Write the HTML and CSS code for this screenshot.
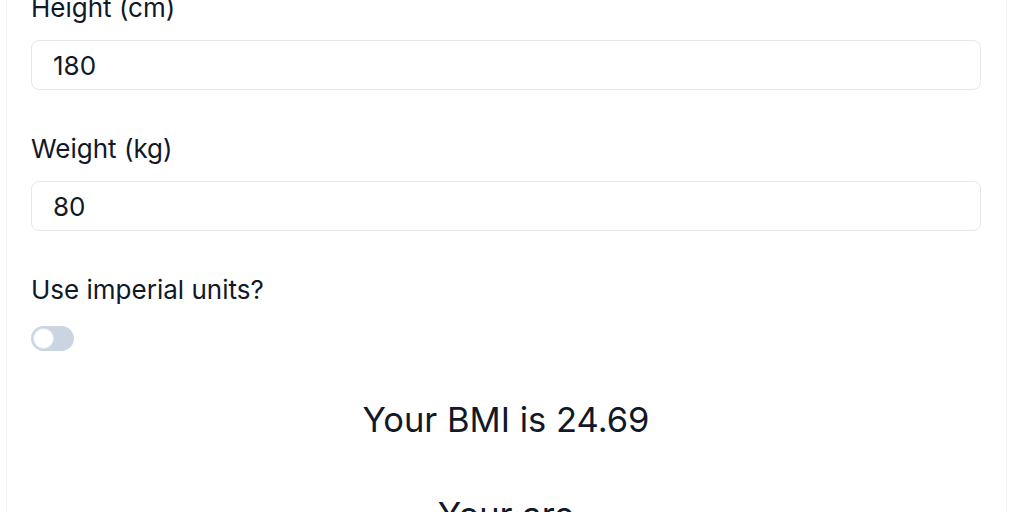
FILE: index.html
```html
<!DOCTYPE html>
<html lang="en">
<head>
<meta charset="utf-8">
<title>BMI Calculator</title>
<link rel="stylesheet" href="styles.css">
</head>
<body>
<main class="card">
  <div class="field">
    <label class="label" for="height">Height (cm)</label>
    <input class="input" id="height" type="text" value="180">
  </div>
  <div class="field">
    <label class="label" for="weight">Weight (kg)</label>
    <input class="input" id="weight" type="text" value="80">
  </div>
  <div class="field switch-field">
    <span class="label">Use imperial units?</span>
    <span class="toggle"><span class="knob"></span></span>
  </div>
  <p class="result">Your BMI is 24.69</p>
  <p class="result age">Your are</p>
</main>
</body>
</html>
```
FILE: styles.css
```css
html, body {
  margin: 0;
  padding: 0;
  background: #ffffff;
  overflow: hidden;
}
body {
  font-family: Inter, "Noto Sans", sans-serif;
  color: #111827;
}
.card {
  box-sizing: border-box;
  width: 1001px;
  margin: -35px 0 0 6px;
  padding: 24px 25px 40px 24px;
  border: 1px solid #f1f2f4;
  border-radius: 10px;
  display: flex;
  flex-direction: column;
}
.field {
  display: flex;
  flex-direction: column;
  align-items: flex-start;
  margin-bottom: 41px;
}
.switch-field {
  margin-bottom: 45px;
}
.label {
  font-size: 26px;
  line-height: 36px;
  margin-bottom: 14px;
}
.switch-field .label {
  margin-bottom: 18px;
}
.input {
  box-sizing: border-box;
  width: 100%;
  height: 50px;
  padding: 0 21px;
  border: 1px solid #e5e7eb;
  border-radius: 8px;
  font-family: inherit;
  font-size: 26px;
  color: #111827;
  background: #ffffff;
  outline: none;
}
.toggle {
  box-sizing: border-box;
  width: 43px;
  height: 25px;
  border-radius: 13px;
  background: #cbd5e1;
  padding: 2px;
  display: flex;
  align-items: center;
}
.knob {
  box-sizing: border-box;
  width: 21px;
  height: 21px;
  border-radius: 50%;
  background: #ffffff;
  border: 1px solid #e2e8f0;
}
.result {
  margin: 0;
  text-align: center;
  font-size: 34.5px;
  line-height: 48px;
}
.age {
  margin-top: 47px;
}
```
